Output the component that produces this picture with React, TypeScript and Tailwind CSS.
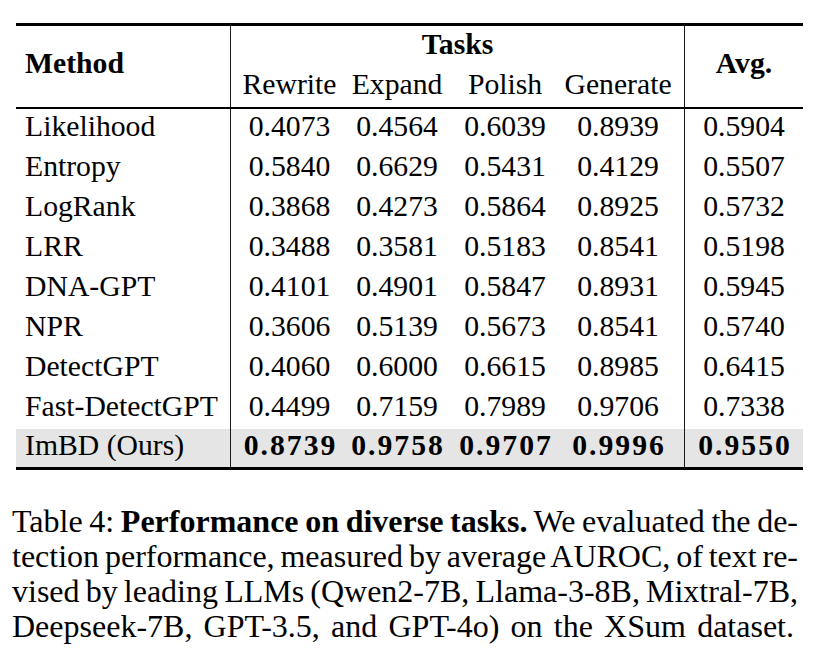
import React from 'react';

const cols = 'grid grid-cols-[214px_118px_98px_118px_120px_119px]';

const rows = [
  { name: 'Likelihood', vals: ['0.4073', '0.4564', '0.6039', '0.8939'], avg: '0.5904' },
  { name: 'Entropy', vals: ['0.5840', '0.6629', '0.5431', '0.4129'], avg: '0.5507' },
  { name: 'LogRank', vals: ['0.3868', '0.4273', '0.5864', '0.8925'], avg: '0.5732' },
  { name: 'LRR', vals: ['0.3488', '0.3581', '0.5183', '0.8541'], avg: '0.5198' },
  { name: 'DNA-GPT', vals: ['0.4101', '0.4901', '0.5847', '0.8931'], avg: '0.5945' },
  { name: 'NPR', vals: ['0.3606', '0.5139', '0.5673', '0.8541'], avg: '0.5740' },
  { name: 'DetectGPT', vals: ['0.4060', '0.6000', '0.6615', '0.8985'], avg: '0.6415' },
  { name: 'Fast-DetectGPT', vals: ['0.4499', '0.7159', '0.7989', '0.9706'], avg: '0.7338' },
];

const ours = { name: 'ImBD (Ours)', vals: ['0.8739', '0.9758', '0.9707', '0.9996'], avg: '0.9550' };

const Row = ({ r, highlight }: { r: typeof ours; highlight?: boolean }) => {
  const num = highlight ? 'font-bold tracking-[2px] pl-[2px]' : '';
  const cell = 'h-full flex items-center pb-1';
  return (
    <div className={`${cols} ${highlight ? 'h-[38px] bg-[#e5e5e5]' : 'h-10'}`}>
      <div className={`${cell} pl-[9px]`}>{r.name}</div>
      <div className={`${cell} justify-center border-l-[1.5px] border-[#1a1a1a] ${num}`}>{r.vals[0]}</div>
      <div className={`${cell} justify-center ${num}`}>{r.vals[1]}</div>
      <div className={`${cell} justify-center ${num}`}>{r.vals[2]}</div>
      <div className={`${cell} justify-center pr-3 ${num}`}>{r.vals[3]}</div>
      <div className={`${cell} justify-center border-l-[1.5px] border-[#1a1a1a] ${num}`}>{r.avg}</div>
    </div>
  );
};

const App = () => {
  return (
    <div className="w-[819px] h-[666px] bg-white pt-[23px] text-black font-['Liberation_Serif',serif]">
      <div className="ml-4 w-[787px] border-t-[3px] border-b-[3px] border-black text-[29.7px] leading-none">
        <div className={`${cols} grid-rows-[41px_40px] border-b-2 border-black`}>
          <div className="row-span-2 col-start-1 row-start-1 flex items-center pb-[6px] pl-[9px] font-bold">Method</div>
          <div className="col-start-2 col-span-4 row-start-1 flex items-center justify-center pb-1 font-bold border-l-[1.5px] border-[#1a1a1a]">
            Tasks
          </div>
          <div className="col-start-6 row-start-1 row-span-2 flex items-center justify-center pb-[6px] font-bold border-l-[1.5px] border-[#1a1a1a]">
            Avg.
          </div>
          <div className="col-start-2 row-start-2 flex items-center justify-center pb-1 border-l-[1.5px] border-[#1a1a1a]">
            Rewrite
          </div>
          <div className="col-start-3 row-start-2 flex items-center justify-center pb-1">Expand</div>
          <div className="col-start-4 row-start-2 flex items-center justify-center pb-1">Polish</div>
          <div className="col-start-5 row-start-2 flex items-center justify-center pb-1 pr-3">Generate</div>
        </div>
        {rows.map((r) => (
          <Row key={r.name} r={r} />
        ))}
        <Row r={ours} highlight />
      </div>

      <div className="ml-3 mt-[34px] w-[786px] text-[32px] leading-[35px]">
        <p className="text-justify [text-align-last:justify] [word-spacing:-4px]">
          Table 4: <span className="font-bold">Performance on diverse tasks.</span> We evaluated the de-
        </p>
        <p className="text-justify [text-align-last:justify] [word-spacing:-4px]">
          tection performance, measured by average AUROC, of text re-
        </p>
        <p className="text-justify [text-align-last:justify] [word-spacing:-4px]">
          vised by leading LLMs (Qwen2-7B, Llama-3-8B, Mixtral-7B,
        </p>
        <p className="w-[782px] text-justify [text-align-last:justify]">
          Deepseek-7B, GPT-3.5, and GPT-4o) on the XSum dataset.
        </p>
      </div>
    </div>
  );
};

export default App;
